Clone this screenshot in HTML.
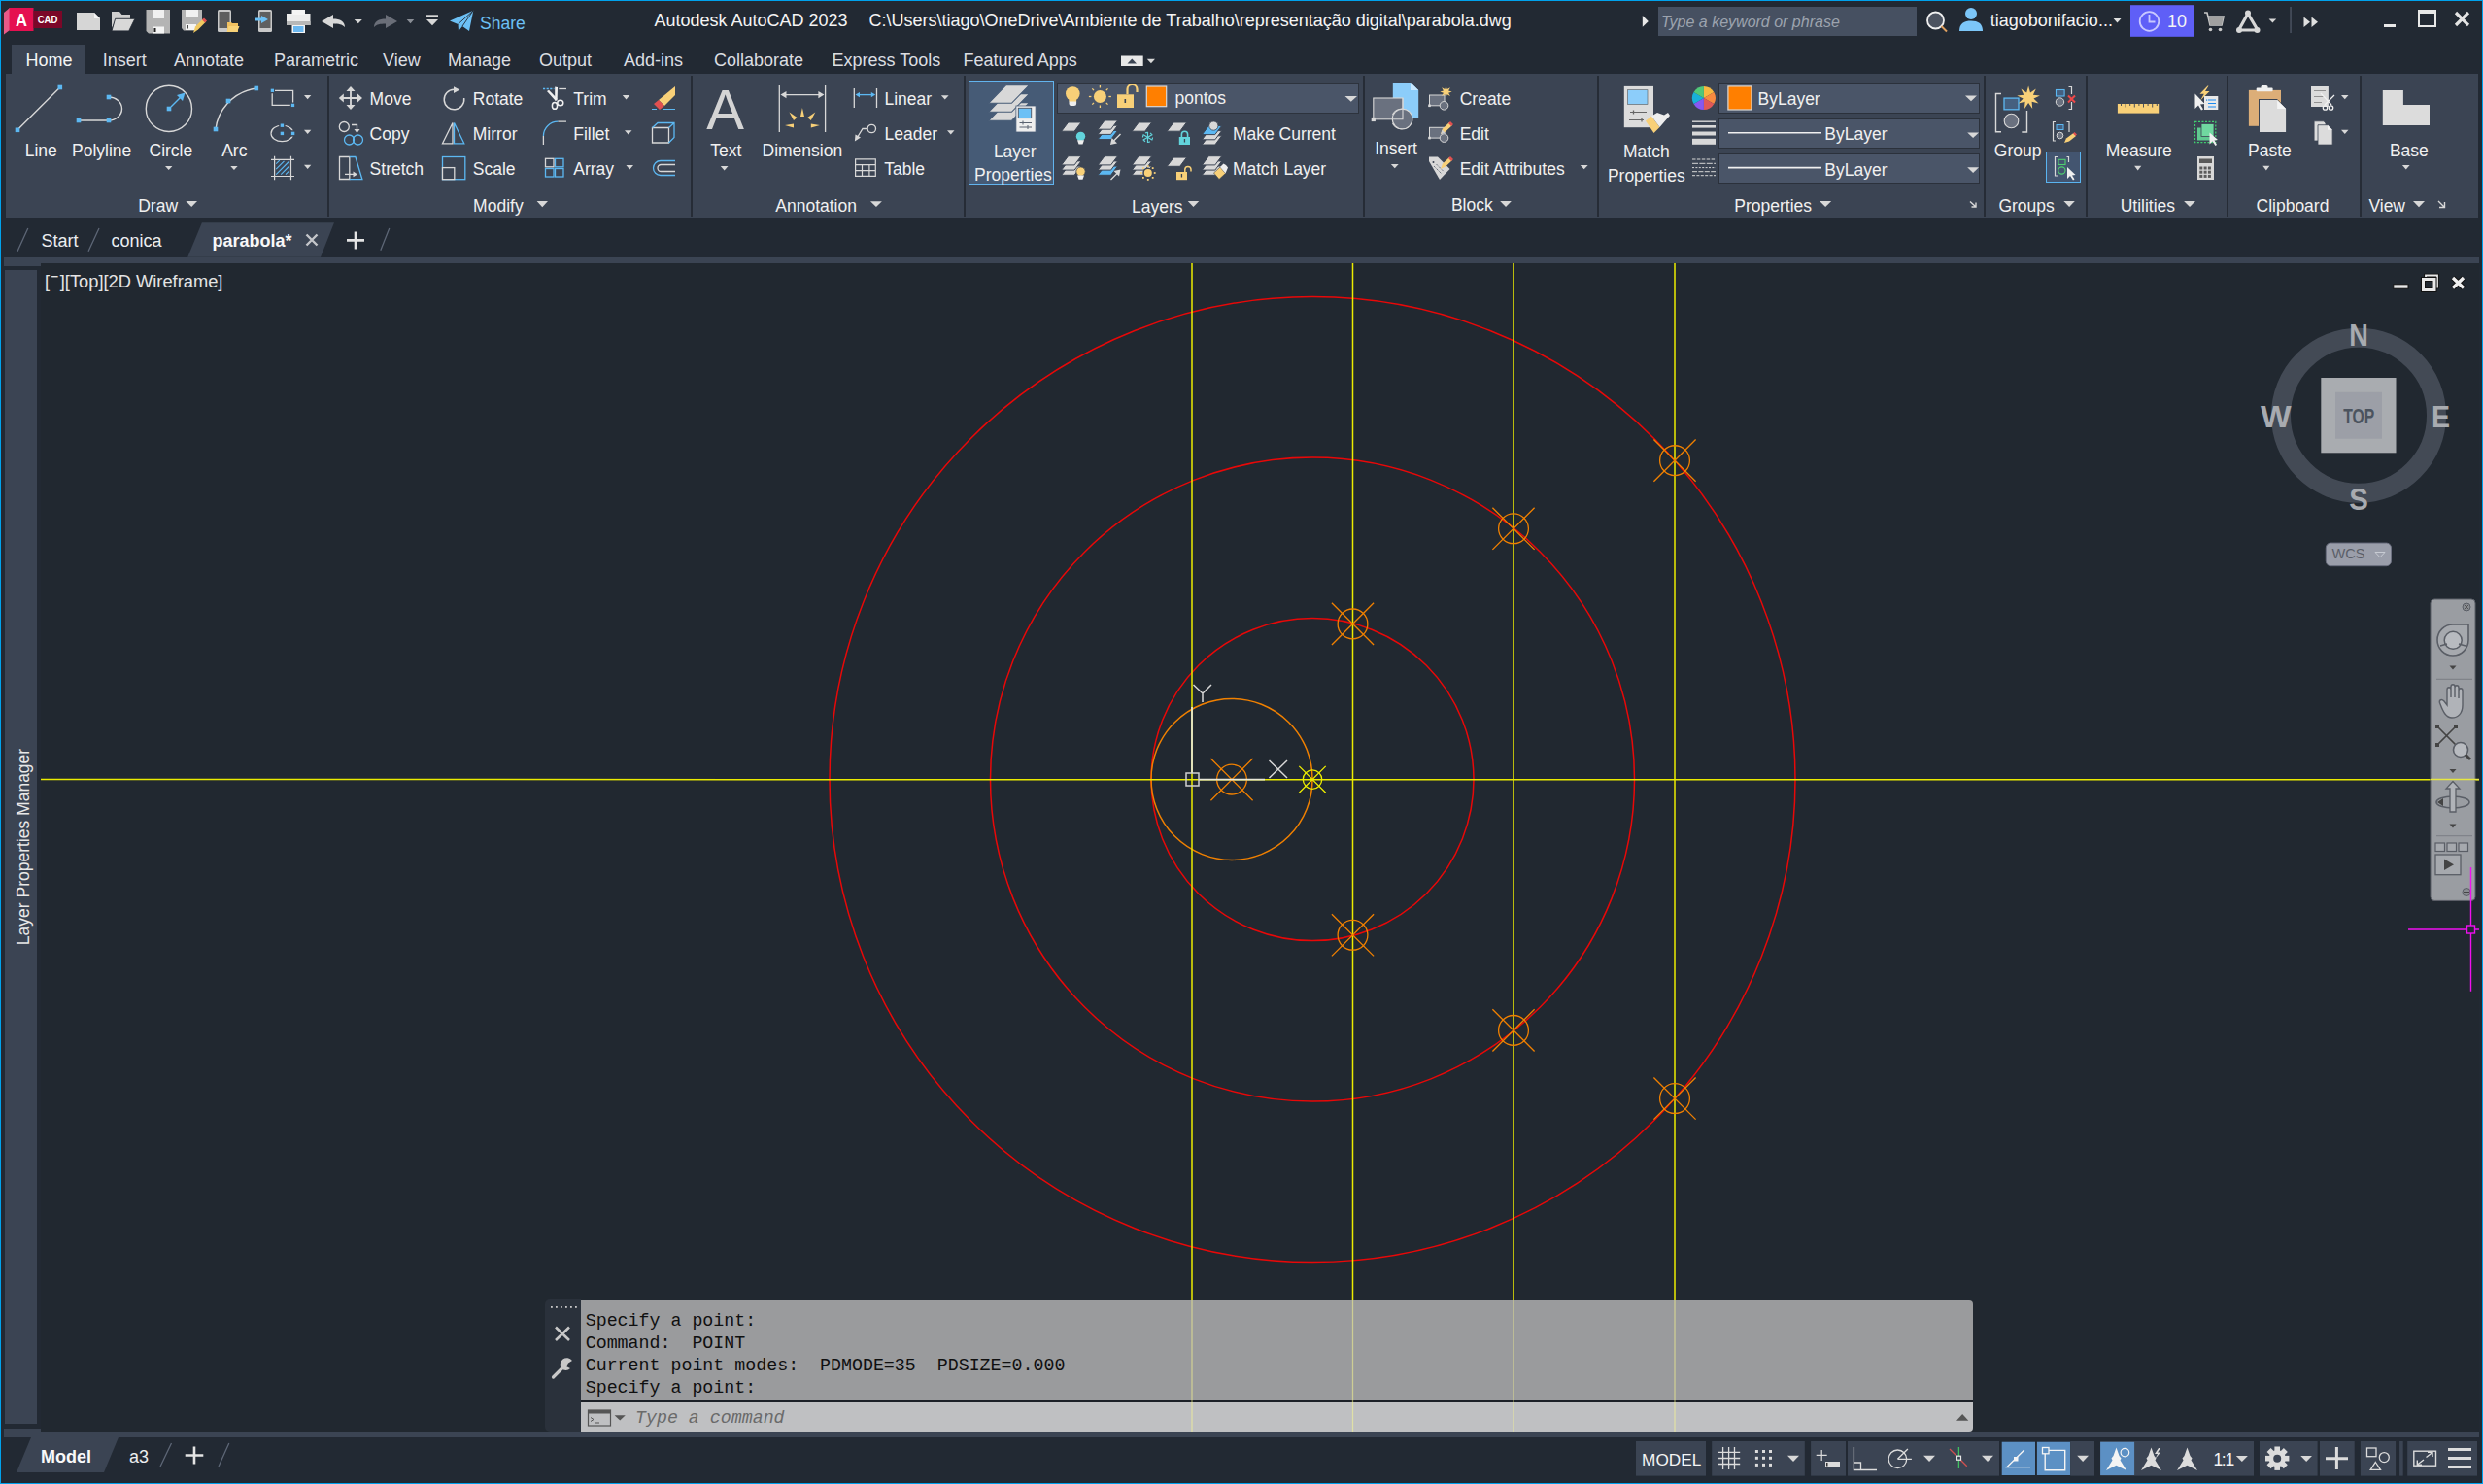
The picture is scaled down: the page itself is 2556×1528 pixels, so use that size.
<!DOCTYPE html>
<html><head><meta charset="utf-8">
<style>
*{margin:0;padding:0;box-sizing:border-box}
html,body{width:2556px;height:1528px;overflow:hidden;background:#222933;font-family:"Liberation Sans",sans-serif;color:#f2f2f2}
.a{position:absolute}
.t{position:absolute;font-size:18px;line-height:18px;white-space:pre;color:#f0f0f0}
.r{background:#3b4453}
.sep{position:absolute;top:78px;width:2px;height:145px;background:#252b35}
.dd{position:absolute;width:0;height:0;border-left:6px solid transparent;border-right:6px solid transparent;border-top:7px solid #dcdcdc}
.sdd{position:absolute;width:0;height:0;border-left:4px solid transparent;border-right:4px solid transparent;border-top:4px solid #d8d8d8}
svg{position:absolute;overflow:visible}
</style></head><body>
<!-- window border -->
<div class="a" style="left:0;top:0;width:2556px;height:1px;background:#00a2ed"></div>
<div class="a" style="left:0;top:0;width:1px;height:1528px;background:#00a2ed"></div>
<div class="a" style="left:2555px;top:0;width:1px;height:1528px;background:#00a2ed"></div>
<div class="a" style="left:0;top:1527px;width:2556px;height:1px;background:#00a2ed"></div>


<!-- ===== TITLE BAR ===== -->
<svg style="left:0;top:0" width="70" height="42" viewBox="0 0 70 42">
 <polygon points="4,13 10,8 10,31 4,35.5" fill="#e85a88"/>
 <rect x="9.5" y="8" width="25" height="24" fill="#e51050"/>
 <rect x="34.5" y="11" width="29.5" height="18" fill="#7b0728"/>
 <text x="16" y="26.7" font-family="Liberation Sans" font-weight="bold" font-size="19" fill="#fff" textLength="12" lengthAdjust="spacingAndGlyphs">A</text>
 <text x="38.7" y="24.2" font-family="Liberation Sans" font-weight="bold" font-size="10.7" fill="#fff" textLength="20.6" lengthAdjust="spacingAndGlyphs">CAD</text>
</svg>
<svg style="left:70px;top:0" width="490" height="42" viewBox="70 0 490 42">
 <!-- new -->
 <polygon points="79,13 97,13 103,19 103,31 79,31" fill="#d6d6d6"/>
 <polygon points="97,13 103,19 97,19" fill="#f4f4f4"/>
 <!-- open -->
 <polygon points="115,12 123,12 125.5,15 134,15 134,20 119,20 115,29" fill="#cfcfcf"/>
 <polygon points="118.6,19.3 138.9,19.3 132.7,31.9 115,31.9" fill="#d8d8d8" stroke="#222933" stroke-width="0.9"/>
 <!-- save -->
 <polygon points="150.5,10 175,10 175,34.5 153,34.5 150.5,32" fill="#b4b4b4"/>
 <rect x="157" y="10" width="12" height="9" fill="#f0f0f0"/>
 <rect x="157" y="27.5" width="12" height="7" fill="#f4f4f4"/>
 <rect x="158.5" y="29" width="2" height="4" fill="#222"/>
 <!-- save as -->
 <polygon points="187,10 208,10 208,25 200,31.5 189,31.5 187,29" fill="#b4b4b4"/>
 <rect x="191" y="10" width="13" height="8" fill="#f0f0f0"/>
 <rect x="191" y="25" width="11" height="6" fill="#f4f4f4"/>
 <rect x="192" y="26" width="1.8" height="3.5" fill="#222"/>
 <polygon points="199,34 201,27.5 209,19.5 212,22.5 204,30.5" fill="#f0c860"/>
 <polygon points="208,20.5 210,18.5 213,21.5 211,23.5" fill="#e05050"/>
 <!-- mobile open -->
 <rect x="224" y="10" width="14" height="23" rx="1.5" fill="#c8c8c8"/>
 <rect x="225.5" y="12" width="11" height="17" fill="#5f5f5f"/>
 <polygon points="234,23 238,23 239,24 245,24 245,33 234,33" fill="#f0c060"/>
 <polygon points="235.5,27 246.5,27 244,33 233.5,33" fill="#f8d278"/>
 <!-- mobile save -->
 <rect x="266" y="10" width="14" height="23" rx="1.5" fill="#c8c8c8"/>
 <rect x="267.5" y="12" width="11" height="17" fill="#5f5f5f"/>
 <polygon points="262,18.5 269,18.5 269,16 276,20 269,24 269,21.5 262,21.5" fill="#6cc0f5"/>
 <!-- plot -->
 <rect x="295" y="14" width="24.5" height="12" fill="#ececec"/>
 <rect x="295" y="22" width="24.5" height="4" fill="#b8b8b8"/>
 <rect x="300.5" y="10" width="13.5" height="5" fill="#f4f4f4"/>
 <rect x="300.5" y="26" width="13.5" height="8" fill="#f4f4f4"/>
 <rect x="302" y="27" width="10.5" height="6" fill="#6cb8f0"/>
 <!-- undo -->
 <path d="M331,22 L343,15 L343,19.5 C350,19.5 355,22 355,28 C352,25 349,24.5 343,24.5 L343,29 Z" fill="#d8d8d8"/>
 <polygon points="364.7,20 372.8,20 368.75,24.3" fill="#d8d8d8"/>
 <!-- redo -->
 <path d="M409,22 L397,15 L397,19.5 C390,19.5 385,22 385,28 C388,25 391,24.5 397,24.5 L397,29 Z" fill="#6a6e78"/>
 <polygon points="418.7,20 426.3,20 422.5,24.3" fill="#8a8e96"/>
 <!-- customize -->
 <rect x="439" y="15.3" width="12" height="1.7" fill="#d8d8d8"/>
 <polygon points="439,20 451,20 445,26.3" fill="#d8d8d8"/>
 <!-- share -->
 <polygon points="463,21.5 487.3,10.8 483,32 476,27 472,32 471.5,25" fill="#6cc0f5"/>
 <polyline points="471.5,25 487,11 476,27" fill="none" stroke="#222933" stroke-width="0.9"/>
</svg>
<div class="t" style="left:494px;top:14.8px;font-size:17.5px;color:#6cc0f5">Share</div>
<div class="t" style="left:673.4px;top:11.6px;color:#f4f4f4">Autodesk AutoCAD 2023</div>
<div class="t" style="left:894.5px;top:11.6px;color:#f4f4f4">C:\Users\tiago\OneDrive\Ambiente de Trabalho\representação digital\parabola.dwg</div>
<svg style="left:1688px;top:15px" width="10" height="14" viewBox="0 0 10 14"><polygon points="2.8,1.1 8.8,6.9 2.8,12.8" fill="#e8e8e8"/></svg>
<div class="a" style="left:1707px;top:7px;width:266px;height:30px;background:#465061"></div>
<div class="t" style="left:1710px;top:13.5px;font-size:16px;font-style:italic;color:#9ca3ae">Type a keyword or phrase</div>
<svg style="left:1976px;top:0" width="420" height="42" viewBox="1976 0 420 42">
 <circle cx="1992.5" cy="21" r="8.5" fill="#4c5360" stroke="#f0f0f0" stroke-width="1.8"/>
 <line x1="1998.5" y1="27" x2="2004" y2="32.5" stroke="#e0a060" stroke-width="2"/>
 <circle cx="2029" cy="14" r="6" fill="#7cc6f8"/>
 <path d="M2017,32 C2017,24 2022,21.5 2029,21.5 C2036,21.5 2041,24 2041,32 Z" fill="#7cc6f8"/>
 <polygon points="2175.6,19 2183.5,19 2179.5,23.5" fill="#e0e0e0"/>
 <rect x="2193" y="5.2" width="66" height="32.6" fill="#5f5ff7"/>
 <circle cx="2212.5" cy="22" r="9.8" fill="none" stroke="#c8c8ff" stroke-width="1.8"/>
 <polyline points="2212.5,15 2212.5,22.5 2218.5,22.5" fill="none" stroke="#c8c8ff" stroke-width="1.8"/>
 <!-- cart -->
 <path d="M2269,13 L2272,13 L2275,26 L2287,26 L2289,17 L2273,17" fill="none" stroke="#c8c8c8" stroke-width="1.6"/>
 <polygon points="2273.5,17 2289,17 2287,26 2275,26" fill="#a0a0a0"/>
 <circle cx="2275.5" cy="30.5" r="1.8" fill="#c8c8c8"/><circle cx="2285.5" cy="30.5" r="1.8" fill="#c8c8c8"/>
 <!-- a360 -->
 <polygon points="2314,14 2324,31 2304.5,31" fill="none" stroke="#d8d8d8" stroke-width="3.2" stroke-linejoin="round"/>
 <circle cx="2314" cy="13.5" r="3" fill="#d8d8d8"/><circle cx="2305" cy="31" r="3" fill="#d8d8d8"/><circle cx="2323.5" cy="31" r="3" fill="#d8d8d8"/>
 <polygon points="2335.6,19.5 2343.2,19.5 2339.4,23.5" fill="#d8d8d8"/>
 <rect x="2357.3" y="7" width="1.5" height="27" fill="#4a5260"/>
 <polygon points="2371.5,17.5 2378,22.75 2371.5,28" fill="#e0e0e0"/>
 <polygon points="2379.5,17.5 2386,22.75 2379.5,28" fill="#e0e0e0"/>
</svg>
<div class="t" style="left:2048.8px;top:11.6px;color:#f4f4f4">tiagobonifacio...</div>
<div class="t" style="left:2231px;top:12.6px;color:#f4f4f4">10</div>
<!-- window controls -->
<div class="a" style="left:2454px;top:25px;width:12px;height:3px;background:#e8e8e8"></div>
<div class="a" style="left:2489px;top:10px;width:19px;height:18px;border:2px solid #e8e8e8;border-top-width:4px"></div>
<svg style="left:2524px;top:8px" width="26" height="24" viewBox="0 0 26 24"><path d="M4,5 L17,18 M17,5 L4,18" stroke="#e4e4e4" stroke-width="3.2"/></svg>
<div class="a r" style="left:12px;top:46px;width:76px;height:31px"></div>
<div class="a r" style="left:6px;top:76px;width:2545px;height:148px"></div>
<div class="a" style="left:336.5px;top:78px;width:2px;height:145px;background:#262c36"></div>
<div class="a" style="left:710.5px;top:78px;width:2px;height:145px;background:#262c36"></div>
<div class="a" style="left:992px;top:78px;width:2px;height:145px;background:#262c36"></div>
<div class="a" style="left:1402.5px;top:78px;width:2px;height:145px;background:#262c36"></div>
<div class="a" style="left:1643.5px;top:78px;width:2px;height:145px;background:#262c36"></div>
<div class="a" style="left:2041.5px;top:78px;width:2px;height:145px;background:#262c36"></div>
<div class="a" style="left:2146.5px;top:78px;width:2px;height:145px;background:#262c36"></div>
<div class="a" style="left:2292px;top:78px;width:2px;height:145px;background:#262c36"></div>
<div class="a" style="left:2428.5px;top:78px;width:2px;height:145px;background:#262c36"></div>
<div class="a" style="left:996.5px;top:82.5px;width:88.8px;height:107.8px;background:#465b76;border:1.5px solid #62b4ee"></div>
<div class="a" style="left:1087.8px;top:84.6px;width:310.8px;height:32.1px;background:#4a5568;border:1.6px solid #2d333d"></div>
<div class="a" style="left:1769.2px;top:84.5px;width:269px;height:32.9px;background:#4a5568;border:1.6px solid #2b313b"></div>
<div class="a" style="left:1769.2px;top:121.6px;width:269px;height:31.7px;background:#4a5568;border:1.6px solid #2b313b"></div>
<div class="a" style="left:1769.2px;top:157.6px;width:269px;height:31.9px;background:#4a5568;border:1.6px solid #2b313b"></div>
<div class="a" style="left:2106.2px;top:155.5px;width:35.8px;height:32.2px;background:#435570;border:1.6px solid #5ab4f0"></div>
<svg style="left:0;top:0" width="2556" height="230" viewBox="0 0 2556 230"><rect x="1154" y="57.5" width="22.7" height="10.5" fill="#e8e8e8"/><polygon points="1160.5,65.5 1170,65.5 1165.3,60.5" fill="#3b4453"/><polygon points="1180.8,60.8 1189,60.8 1184.9,65.2" fill="#d8d8d8"/>
<line x1="18" y1="133.8" x2="61.8" y2="90" stroke="#d8d8d8" stroke-width="1.4"/><rect x="15.7" y="131.5" width="4.6" height="4.6" fill="#5cb8f2"/>
<rect x="59.5" y="87.7" width="4.6" height="4.6" fill="#5cb8f2"/>
<path d="M81,124 L112,124 M112,100 A13.5,12 0 0 1 112,124" fill="none" stroke="#d8d8d8" stroke-width="1.4"/><rect x="78.7" y="121.7" width="4.6" height="4.6" fill="#5cb8f2"/>
<rect x="109.7" y="121.7" width="4.6" height="4.6" fill="#5cb8f2"/>
<rect x="109.7" y="97.7" width="4.6" height="4.6" fill="#5cb8f2"/>
<circle cx="173.9" cy="111.9" r="23.6" fill="none" stroke="#d8d8d8" stroke-width="1.4"/><rect x="171.7" y="109.7" width="4.6" height="4.6" fill="#5cb8f2"/>
<line x1="176" y1="110" x2="186" y2="100" stroke="#5cb8f2" stroke-width="1.4"/><polygon points="190.5,95.5 182,98 188,104" fill="#5cb8f2"/><path d="M222,133 C224,115 238,95 263.8,91" fill="none" stroke="#d8d8d8" stroke-width="1.4"/><rect x="219.7" y="130.7" width="4.6" height="4.6" fill="#5cb8f2"/>
<rect x="232.7" y="101.7" width="4.6" height="4.6" fill="#5cb8f2"/>
<rect x="261.5" y="88.7" width="4.6" height="4.6" fill="#5cb8f2"/>
<path d="M283,93.3 H301.6 V105.6 M298.8,108.4 H280.2 V96.2" fill="none" stroke="#d8d8d8" stroke-width="1.3"/><rect x="278.75" y="91.64999999999999" width="3.3" height="3.3" fill="#5cb8f2"/>
<rect x="299.85" y="106.75" width="3.3" height="3.3" fill="#5cb8f2"/>
<ellipse cx="290.4" cy="137.4" rx="11.4" ry="8.2" fill="none" stroke="#d8d8d8" stroke-width="1.2"/><rect x="287.2" y="127" width="6.4" height="4.6" fill="#3b4453"/><rect x="299" y="134.2" width="5" height="6.4" fill="#3b4453"/><rect x="288.7" y="135.70000000000002" width="3.4" height="3.4" fill="#5cb8f2"/>
<rect x="288.7" y="127.49999999999999" width="3.4" height="3.4" fill="#5cb8f2"/>
<rect x="299.90000000000003" y="135.70000000000002" width="3.4" height="3.4" fill="#5cb8f2"/>
<path d="M279,164.4 H303 M279,181.5 H303 M282.6,160.8 V185.2 M299.5,160.8 V185.2" stroke="#d8d8d8" stroke-width="1.2"/><path d="M284.2,168.6 L287.8,165.2 M284.2,174.2 L292.5,165.8 M284.2,179.6 L297.8,166 M289.2,179.6 L297.8,171 M294,179.6 L297.8,175.8" stroke="#5cb8f2" stroke-width="1.1"/><polygon points="313,98 320.3,98 316.65,102.3" fill="#d8d8d8"/>
<polygon points="313,133.8 320.3,133.8 316.65,138.10000000000002" fill="#d8d8d8"/>
<polygon points="313,169.7 320.3,169.7 316.65,174.0" fill="#d8d8d8"/>
<polygon points="170,171 177.4,171 173.7,175" fill="#d8d8d8"/>
<polygon points="237.3,171 244.6,171 240.95,175" fill="#d8d8d8"/>
<polygon points="191.4,207 203,207 197.2,213" fill="#d8d8d8"/>
<path d="M361,92 V111 M350.5,101 H371.5" stroke="#d8d8d8" stroke-width="1.8"/><polygon points="361,89 356.5,94 365.5,94" fill="#d8d8d8"/><polygon points="361,113 356.5,108 365.5,108" fill="#d8d8d8"/><polygon points="348.8,101 353.8,96.5 353.8,105.5" fill="#d8d8d8"/><polygon points="373,101 368,96.5 368,105.5" fill="#d8d8d8"/><path d="M467.3,92.2 A10.3,10.3 0 1 0 477.7,101" fill="none" stroke="#d8d8d8" stroke-width="1.5"/><polygon points="467,89.2 473.3,92.6 467,96" fill="#d8d8d8"/><path d="M559,91.5 H570.5" stroke="#5cb8f2" stroke-width="1.3" stroke-dasharray="2.2,1.4"/><path d="M575.3,91.5 H583" stroke="#d8d8d8" stroke-width="1.3"/><polygon points="571.2,89.5 574,90 573.6,103.5 571.2,103.5" fill="#f0f0f0"/><polygon points="563,94 565,92.8 573.5,101.5 572,104" fill="#f0f0f0"/><ellipse cx="571" cy="108.9" rx="2.6" ry="3.4" fill="none" stroke="#f0f0f0" stroke-width="1.5"/><ellipse cx="576.8" cy="106" rx="3" ry="2.8" fill="none" stroke="#f0f0f0" stroke-width="1.5"/><polygon points="678,103 695,89 695,98 684,109" fill="#f8d078"/><polygon points="673,107 678,103 684,109 679,113" fill="#e05050"/><path d="M671,112.5 H676 M682,112.5 H695" stroke="#5cb8f2" stroke-width="1.2"/><circle cx="354.3" cy="130.5" r="5" fill="none" stroke="#d8d8d8" stroke-width="1.3"/><circle cx="359.5" cy="144" r="5" fill="none" stroke="#5cb8f2" stroke-width="1.3"/><circle cx="368.5" cy="144" r="5" fill="none" stroke="#5cb8f2" stroke-width="1.3"/><path d="M362,128.5 H367.5 V133" fill="none" stroke="#d8d8d8" stroke-width="1.3"/><polygon points="364.5,133 370.5,133 367.5,137" fill="#d8d8d8"/><polygon points="455.5,147.8 466,126.5 466,147.8" fill="none" stroke="#d8d8d8" stroke-width="1.3"/><polygon points="467.5,147.8 467.5,126.5 477.8,147.8" fill="none" stroke="#5cb8f2" stroke-width="1.3"/><path d="M559.4,140 A15,15 0 0 1 574.5,125.2" fill="none" stroke="#5cb8f2" stroke-width="1.3"/><path d="M559.4,140 V149 M574.5,125.2 H583" stroke="#d8d8d8" stroke-width="1.3"/><path d="M671.5,131.5 H688.5 V147 H671.5 Z" fill="none" stroke="#d8d8d8" stroke-width="1.3"/><path d="M671.5,131.5 L677,126.5 H694 V141.5 L688.5,147 M688.5,131.5 L694,126.5" fill="none" stroke="#5cb8f2" stroke-width="1.3"/><path d="M359.8,161.5 H349.5 V184.5 H359.8 V161.5" fill="none" stroke="#d8d8d8" stroke-width="1.3"/><path d="M359.8,161.5 H365.9 L372.9,184.7 H359.8" fill="none" stroke="#5cb8f2" stroke-width="1.3"/><path d="M355,179.4 H364" stroke="#d8d8d8" stroke-width="1.3"/><polygon points="368,179.4 363.5,176.5 363.5,182.3" fill="#d8d8d8"/><rect x="455.5" y="161.5" width="23.3" height="23.2" fill="none" stroke="#5cb8f2" stroke-width="1.3"/><rect x="455.5" y="172.6" width="12.3" height="12.1" fill="#3b4453" stroke="#d8d8d8" stroke-width="1.3"/><rect x="561.5" y="163.3" width="8.5" height="8.5" fill="none" stroke="#d8d8d8" stroke-width="1.3"/><rect x="571.5" y="163.3" width="8.5" height="8.5" fill="none" stroke="#5cb8f2" stroke-width="1.3"/><rect x="561.5" y="173.5" width="8.5" height="8.5" fill="none" stroke="#5cb8f2" stroke-width="1.3"/><rect x="571.5" y="173.5" width="8.5" height="8.5" fill="none" stroke="#5cb8f2" stroke-width="1.3"/><path d="M695,165.5 H680 A7.5,7.5 0 0 0 680,180.5 H695" fill="none" stroke="#5cb8f2" stroke-width="1.3"/><path d="M695,169.5 H680.5 A3.5,3.5 0 0 0 680.5,176.5 H695" fill="none" stroke="#d8d8d8" stroke-width="1.3"/><polygon points="640.8,98 648.3,98 644.55,102.6" fill="#d8d8d8"/>
<polygon points="643,134.2 650.5,134.2 646.75,138.6" fill="#d8d8d8"/>
<polygon points="644.5,170 652,170 648.25,174.5" fill="#d8d8d8"/>
<polygon points="552.6,207 564,207 558.3,213.3" fill="#d8d8d8"/>
<text x="746.5" y="133.2" font-family="Liberation Sans" font-size="58" fill="#d4d4d4" text-anchor="middle">A</text><polygon points="741.8,170.9 749.5,170.9 745.65,175.4" fill="#d8d8d8"/>
<path d="M802.3,88 V136 M849.6,88 V136 M808,97.6 H844" stroke="#d8d8d8" stroke-width="1.3"/><polygon points="803.5,97.6 809.5,94 809.5,101.2" fill="#d8d8d8"/><polygon points="848.4,97.6 842.4,94 842.4,101.2" fill="#d8d8d8"/><g fill="#f8d078"><polygon points="825.9,111 824,120 828,120"/><polygon points="812.5,115.5 817,124 820.5,121"/><polygon points="839.3,115.5 834.8,124 831.3,121"/><polygon points="808,129 817,127.5 817,131.5"/><polygon points="843.8,129 834.8,127.5 834.8,131.5"/></g><path d="M879.3,91 V111 M902.5,91 V111" stroke="#d8d8d8" stroke-width="1.3"/><path d="M883,97.6 H899" stroke="#5cb8f2" stroke-width="1.3"/><polygon points="880.5,97.6 885,95 885,100.2" fill="#5cb8f2"/><polygon points="901.3,97.6 896.8,95 896.8,100.2" fill="#5cb8f2"/><circle cx="897.3" cy="132.5" r="4.2" fill="none" stroke="#d8d8d8" stroke-width="1.3"/><path d="M893,132.5 H888 L882.5,141.5" fill="none" stroke="#d8d8d8" stroke-width="1.3"/><polygon points="879.9,145.6 880.5,138.5 886,141.5" fill="#d8d8d8"/><path d="M880.6,163.8 H901.3 V181.3 H880.6 Z M880.6,169.7 H901.3 M880.6,175.6 H901.3 M887.5,169.7 V181.3 M894.9,169.7 V181.3" fill="none" stroke="#d8d8d8" stroke-width="1.2"/><polygon points="968.9,98.2 976.6,98.2 972.75,102.5" fill="#d8d8d8"/>
<polygon points="975,134.3 982.5,134.3 978.75,138.5" fill="#d8d8d8"/>
<polygon points="896,207.2 907.9,207.2 901.95,212.9" fill="#d8d8d8"/>
<polygon points="1017.6,124.3 1035.8,105.6 1059.6,105.6 1041.4,124.3" fill="#d8d8d8" stroke="#465b76" stroke-width="1.1"/><polygon points="1017.6,115.3 1035.8,96.6 1059.6,96.6 1041.4,115.3" fill="#d8d8d8" stroke="#465b76" stroke-width="1.1"/><polygon points="1017.6,106.3 1035.8,87.6 1059.6,87.6 1041.4,106.3" fill="#d8d8d8" stroke="#465b76" stroke-width="1.1"/><rect x="1045.9" y="109" width="20.2" height="27" fill="#eeeeee" stroke="#465b76" stroke-width="0.8"/><rect x="1048.3" y="111.3" width="13.4" height="10.3" fill="#6cc0f5" stroke="#4a5260" stroke-width="0.9"/><path d="M1049.5,126.5 H1062 M1049.5,131 H1062" stroke="#5a6270" stroke-width="1"/><path d="M1053,124.5 V128.5 M1058,129 V133" stroke="#5a6270" stroke-width="1"/><circle cx="1104.3" cy="96.5" r="7.3" fill="#f8d078"/><rect x="1100.5" y="102" width="7.6" height="7" rx="2.5" fill="#eeeeee"/><rect x="1100.5" y="101.5" width="7.6" height="3" fill="#f8d078"/><circle cx="1132.4" cy="99.5" r="6.5" fill="#f8d078"/><line x1="1141.4" y1="99.5" x2="1143.9" y2="99.5" stroke="#f8d078" stroke-width="1.3"/><line x1="1138.8" y1="105.9" x2="1140.5" y2="107.6" stroke="#f8d078" stroke-width="1.3"/><line x1="1132.4" y1="108.5" x2="1132.4" y2="111.0" stroke="#f8d078" stroke-width="1.3"/><line x1="1126.0" y1="105.9" x2="1124.3" y2="107.6" stroke="#f8d078" stroke-width="1.3"/><line x1="1123.4" y1="99.5" x2="1120.9" y2="99.5" stroke="#f8d078" stroke-width="1.3"/><line x1="1126.0" y1="93.1" x2="1124.3" y2="91.4" stroke="#f8d078" stroke-width="1.3"/><line x1="1132.4" y1="90.5" x2="1132.4" y2="88.0" stroke="#f8d078" stroke-width="1.3"/><line x1="1138.8" y1="93.1" x2="1140.5" y2="91.4" stroke="#f8d078" stroke-width="1.3"/><rect x="1150" y="97.3" width="17" height="13.7" fill="#f8d078"/><path d="M1160.5,97.3 V92 A5,5 0 0 1 1170.5,92 V95" fill="none" stroke="#f8d078" stroke-width="2.2"/><rect x="1157.5" y="102" width="1.6" height="4" fill="#3b4453"/><rect x="1180.3" y="89" width="20.4" height="20.7" fill="#ff7f00" stroke="#d8d8d8" stroke-width="1.2"/><polygon points="1384.5,99 1397,99 1390.75,104.8" fill="#d8d8d8"/>
<polygon points="1092.7,135.2 1099.6000000000001,125.99999999999999 1113.0000000000002,125.99999999999999 1106.1000000000001,135.2" fill="#d8d8d8" stroke="#3b4453" stroke-width="1"/><circle cx="1112.5" cy="140.4" r="4.7" fill="#62d4dc"/><polygon points="1109,144.3 1116,144.3 1114.5,148.6 1110.5,148.6" fill="#eee"/><polygon points="1130.2,143.6 1137.1000000000001,134.4 1150.5000000000002,134.4 1143.6000000000001,143.6" fill="#5cb8f2" stroke="#3b4453" stroke-width="1"/><polygon points="1130.2,138.4 1137.1000000000001,129.20000000000002 1150.5000000000002,129.20000000000002 1143.6000000000001,138.4" fill="#d8d8d8" stroke="#3b4453" stroke-width="1"/><polygon points="1130.2,133.2 1137.1000000000001,123.99999999999999 1150.5000000000002,123.99999999999999 1143.6000000000001,133.2" fill="#d8d8d8" stroke="#3b4453" stroke-width="1"/><path d="M1153.5,138 L1146,145.5" stroke="#d8d8d8" stroke-width="1.4"/><polygon points="1143,149 1144.5,142 1150,147.5" fill="#d8d8d8"/><polygon points="1165.3,135.2 1172.2,125.99999999999999 1185.6000000000001,125.99999999999999 1178.7,135.2" fill="#d8d8d8" stroke="#3b4453" stroke-width="1"/><g stroke="#62d4dc" stroke-width="1.2" fill="none"><line x1="1181.5" y1="135.8" x2="1181.5" y2="147"/><line x1="1176.6" y1="138.6" x2="1186.4" y2="144.2"/><line x1="1176.6" y1="144.2" x2="1186.4" y2="138.6"/><circle cx="1181.5" cy="141.4" r="5" stroke-dasharray="2.2,2.9"/></g><polygon points="1201.3,135.2 1208.2,125.99999999999999 1221.6000000000001,125.99999999999999 1214.7,135.2" fill="#d8d8d8" stroke="#3b4453" stroke-width="1"/><rect x="1213.8" y="141" width="11.2" height="8" fill="#62d4dc"/><path d="M1216.4,141 V138.3 A3.1,3.1 0 0 1 1222.6,138.3 V141" fill="none" stroke="#62d4dc" stroke-width="1.6"/><rect x="1218.8" y="143" width="1.3" height="3.5" fill="#3b4453"/><polygon points="1237.4,149.0 1244.3000000000002,139.8 1257.7000000000003,139.8 1250.8000000000002,149.0" fill="#d8d8d8" stroke="#3b4453" stroke-width="1"/><polygon points="1237.4,143.8 1244.3000000000002,134.60000000000002 1257.7000000000003,134.60000000000002 1250.8000000000002,143.8" fill="#d8d8d8" stroke="#3b4453" stroke-width="1"/><polygon points="1237.4,138.6 1244.3000000000002,129.4 1257.7000000000003,129.4 1250.8000000000002,138.6" fill="#5cb8f2" stroke="#3b4453" stroke-width="1"/><circle cx="1249.3" cy="129.6" r="4.6" fill="#d8d8d8" stroke="#3b4453" stroke-width="0.8"/><polygon points="1092.7,180.3 1099.6000000000001,171.10000000000002 1113.0000000000002,171.10000000000002 1106.1000000000001,180.3" fill="#d8d8d8" stroke="#3b4453" stroke-width="1"/><polygon points="1092.7,175.10000000000002 1099.6000000000001,165.90000000000003 1113.0000000000002,165.90000000000003 1106.1000000000001,175.10000000000002" fill="#d8d8d8" stroke="#3b4453" stroke-width="1"/><polygon points="1092.7,169.9 1099.6000000000001,160.70000000000002 1113.0000000000002,160.70000000000002 1106.1000000000001,169.9" fill="#d8d8d8" stroke="#3b4453" stroke-width="1"/><circle cx="1112.5" cy="176.6" r="4.7" fill="#f8d078" stroke="#3b4453" stroke-width="0.8"/><polygon points="1109,180.6 1116,180.6 1114.5,184.8 1110.5,184.8" fill="#eee"/><polygon points="1130.2,180.3 1137.1000000000001,171.10000000000002 1150.5000000000002,171.10000000000002 1143.6000000000001,180.3" fill="#5cb8f2" stroke="#3b4453" stroke-width="1"/><polygon points="1130.2,175.10000000000002 1137.1000000000001,165.90000000000003 1150.5000000000002,165.90000000000003 1143.6000000000001,175.10000000000002" fill="#d8d8d8" stroke="#3b4453" stroke-width="1"/><polygon points="1130.2,169.9 1137.1000000000001,160.70000000000002 1150.5000000000002,160.70000000000002 1143.6000000000001,169.9" fill="#d8d8d8" stroke="#3b4453" stroke-width="1"/><path d="M1143.5,185 L1151,177.5" stroke="#d8d8d8" stroke-width="1.3"/><polygon points="1153.5,174.5 1146.5,176 1152,181.5" fill="#d8d8d8"/><polygon points="1165.3,180.3 1172.2,171.10000000000002 1185.6000000000001,171.10000000000002 1178.7,180.3" fill="#d8d8d8" stroke="#3b4453" stroke-width="1"/><polygon points="1165.3,175.10000000000002 1172.2,165.90000000000003 1185.6000000000001,165.90000000000003 1178.7,175.10000000000002" fill="#d8d8d8" stroke="#3b4453" stroke-width="1"/><polygon points="1165.3,169.9 1172.2,160.70000000000002 1185.6000000000001,160.70000000000002 1178.7,169.9" fill="#d8d8d8" stroke="#3b4453" stroke-width="1"/><circle cx="1181.8" cy="178" r="5.5" fill="#3b4453"/><circle cx="1181.8" cy="178" r="4" fill="#f8d078"/><rect x="1187.8" y="177.1" width="1.8" height="1.8" fill="#f8d078"/><rect x="1185.8" y="182.0" width="1.8" height="1.8" fill="#f8d078"/><rect x="1180.9" y="184.0" width="1.8" height="1.8" fill="#f8d078"/><rect x="1176.0" y="182.0" width="1.8" height="1.8" fill="#f8d078"/><rect x="1174.0" y="177.1" width="1.8" height="1.8" fill="#f8d078"/><rect x="1176.0" y="172.2" width="1.8" height="1.8" fill="#f8d078"/><rect x="1180.9" y="170.2" width="1.8" height="1.8" fill="#f8d078"/><rect x="1185.8" y="172.2" width="1.8" height="1.8" fill="#f8d078"/><polygon points="1201.3,171.3 1208.2,162.10000000000002 1221.6000000000001,162.10000000000002 1214.7,171.3" fill="#d8d8d8" stroke="#3b4453" stroke-width="1"/><rect x="1211" y="177" width="11" height="8.2" fill="#f8d078"/><path d="M1219.8,177 V174.5 A3.1,3.1 0 0 1 1226,174.5 V176.5" fill="none" stroke="#f8d078" stroke-width="1.5"/><rect x="1215.8" y="179" width="1.3" height="3.5" fill="#3b4453"/><polygon points="1237.4,180.3 1244.3000000000002,171.10000000000002 1257.7000000000003,171.10000000000002 1250.8000000000002,180.3" fill="#d8d8d8" stroke="#3b4453" stroke-width="1"/><polygon points="1237.4,175.10000000000002 1244.3000000000002,165.90000000000003 1257.7000000000003,165.90000000000003 1250.8000000000002,175.10000000000002" fill="#d8d8d8" stroke="#3b4453" stroke-width="1"/><polygon points="1237.4,169.9 1244.3000000000002,160.70000000000002 1257.7000000000003,160.70000000000002 1250.8000000000002,169.9" fill="#d8d8d8" stroke="#3b4453" stroke-width="1"/><polygon points="1249.5,178 1256,172 1261.5,178.5 1255,184.5" fill="#f8d078" stroke="#3b4453" stroke-width="0.6"/><polygon points="1256,172 1259.5,168.5 1262,170 1264,172.5 1261.5,178.5" fill="#eee"/><polygon points="1222.7,207 1234.3,207 1228.5,213" fill="#d8d8d8"/>
<polygon points="1433.8,85 1452,85 1460.2,93 1460.2,122 1433.8,122" fill="#8ccdfa"/><polygon points="1452,85 1460.2,93 1452,93" fill="#c8e8ff"/><rect x="1413.8" y="101" width="30.2" height="21.8" fill="#6a717f" stroke="#d8d8d8" stroke-width="1.1"/><path d="M1433.5,118 A10.3,10.3 0 1 1 1433.5,127" fill="#6a717f" stroke="#d8d8d8" stroke-width="1.1"/><circle cx="1443.6" cy="122.5" r="10.3" fill="#6a717f" stroke="#d8d8d8" stroke-width="1.1"/><path d="M1433.3,122.8 H1444 V101" fill="none" stroke="#d8d8d8" stroke-width="1.1"/><rect x="1411.7" y="120.9" width="4.2" height="4.2" fill="#d8d8d8"/>
<polygon points="1431.8,168.9 1439.7,168.9 1435.75,173.3" fill="#d8d8d8"/>
<rect x="1471.5" y="98" width="15.5" height="10.8" fill="#6a717f" stroke="#d8d8d8" stroke-width="1"/><circle cx="1486.5" cy="108.8" r="4.3" fill="#6a717f" stroke="#d8d8d8" stroke-width="1"/><rect x="1470.2" y="107.5" width="2.6" height="2.6" fill="#d8d8d8"/>
<rect x="1471.5" y="131.3" width="15.5" height="10.8" fill="#6a717f" stroke="#d8d8d8" stroke-width="1"/><circle cx="1486.5" cy="142.10000000000002" r="4.3" fill="#6a717f" stroke="#d8d8d8" stroke-width="1"/><rect x="1470.2" y="140.8" width="2.6" height="2.6" fill="#d8d8d8"/>
<polygon points="1494.7,94.6 1491.1,95.7 1492.9,99.0 1489.6,97.2 1488.5,100.8 1487.4,97.2 1484.1,99.0 1485.9,95.7 1482.3,94.6 1485.9,93.5 1484.1,90.2 1487.4,92.0 1488.5,88.4 1489.6,92.0 1492.9,90.2 1491.1,93.5" fill="#f8d078"/><polygon points="1483,138 1485,132.5 1492,126 1495,129 1488,135.5" fill="#f8d078"/><polygon points="1491,127 1493,125 1496,128 1494,130" fill="#e05050"/><polygon points="1483,138.5 1484.5,133.5 1487.5,136.5" fill="#d0d0d0"/><polygon points="1471,166 1471,161.5 1480,161.5 1492.5,174 1482,185" fill="#d8d8d8"/><circle cx="1475.5" cy="167" r="1" fill="#3b4453"/><path d="M1476,171 L1484,179 M1478.5,169 L1486,176.5" stroke="#3b4453" stroke-width="0.8" stroke-dasharray="1.2,1"/><polygon points="1483,174 1485,168.5 1492,162 1495,165 1488,171.5" fill="#f8d078"/><polygon points="1491,163 1493,161 1496,164 1494,166" fill="#e05050"/><polygon points="1626.7,169.9 1634.6,169.9 1630.65,174.3" fill="#d8d8d8"/>
<polygon points="1544.2,207 1555.9,207 1550.0500000000002,212.9" fill="#d8d8d8"/>
<rect x="1671.8" y="88.9" width="30.2" height="42.3" fill="#dcdcdc"/><rect x="1675.5" y="92.7" width="20.5" height="14.8" fill="#8ccdfa" stroke="#555" stroke-width="0.6"/><path d="M1678,115.5 H1695 M1677,123.5 H1692" stroke="#666" stroke-width="1"/><path d="M1681.5,113.5 V117.5 M1690,121.5 V125.5" stroke="#666" stroke-width="1.3"/><polygon points="1694,124.5 1700,119.5 1708.5,131 1702.5,137" fill="#f8d078"/><polygon points="1700,119.5 1706,116 1713,118.5 1717,116 1719,119 1714.5,124 1708.5,131" fill="#eeeeee"/><path d="M1753.9,100.9 L1753.90,88.90 A12,12 0 0 1 1764.29,94.90 Z" fill="#f8b840"/><path d="M1753.9,100.9 L1764.29,94.90 A12,12 0 0 1 1764.29,106.90 Z" fill="#f88a40"/><path d="M1753.9,100.9 L1764.29,106.90 A12,12 0 0 1 1753.90,112.90 Z" fill="#e05858"/><path d="M1753.9,100.9 L1753.90,112.90 A12,12 0 0 1 1743.51,106.90 Z" fill="#8858f0"/><path d="M1753.9,100.9 L1743.51,106.90 A12,12 0 0 1 1743.51,94.90 Z" fill="#18b0d8"/><path d="M1753.9,100.9 L1743.51,94.90 A12,12 0 0 1 1753.90,88.90 Z" fill="#50c878"/><g fill="#d8d8d8"><rect x="1742" y="124.5" width="24" height="1.4"/><rect x="1742" y="129" width="24" height="2.6"/><rect x="1742" y="135.5" width="24" height="4"/><rect x="1742" y="142.8" width="24" height="6"/></g><line x1="1742" y1="164" x2="1766" y2="164" stroke="#d8d8d8" stroke-width="1" stroke-dasharray="3.5,1.4"/><line x1="1742" y1="168.3" x2="1766" y2="168.3" stroke="#d8d8d8" stroke-width="1" stroke-dasharray="6,1.4"/><line x1="1742" y1="172.6" x2="1766" y2="172.6" stroke="#d8d8d8" stroke-width="1" stroke-dasharray="2,1.4"/><line x1="1742" y1="176.7" x2="1766" y2="176.7" stroke="#d8d8d8" stroke-width="1" stroke-dasharray="5,1.4"/><line x1="1742" y1="180.7" x2="1766" y2="180.7" stroke="#d8d8d8" stroke-width="1" stroke-dasharray="3,1.4"/><rect x="1778.9" y="88.9" width="24.1" height="24.1" fill="#ff7f00" stroke="#d8d8d8" stroke-width="1.2"/><path d="M1779,136.7 H1875 M1779,172.6 H1875" stroke="#f0f0f0" stroke-width="1.6"/><polygon points="2023,98.5 2035,98.5 2029.0,104.2" fill="#d8d8d8"/>
<polygon points="2025.2,136.4 2037,136.4 2031.1,142" fill="#d8d8d8"/>
<polygon points="2025.2,172.3 2037,172.3 2031.1,178" fill="#d8d8d8"/>
<polygon points="1873.1,207 1885.2,207 1879.15,212.9" fill="#d8d8d8"/>
<path d="M2028,207.5 L2034,213 M2034,208.5 V213 H2029.5" fill="none" stroke="#d8d8d8" stroke-width="1.4"/><path d="M2060,96.5 H2054.5 V135.8 H2060 M2081.3,136 H2086.5 V114" fill="none" stroke="#d8d8d8" stroke-width="1.4"/><rect x="2063" y="101.1" width="15" height="11.7" fill="#456080" stroke="#5cb8f2" stroke-width="1.3"/><circle cx="2070.5" cy="124.5" r="7.3" fill="#6a717f" stroke="#d8d8d8" stroke-width="1.1"/><polygon points="2088.1,88.6 2090.0,95.4 2095.8,91.4 2092.9,97.8 2099.9,98.5 2093.5,101.6 2098.5,106.6 2091.6,104.8 2092.2,111.9 2088.1,106.1 2084.0,111.9 2084.6,104.8 2077.7,106.6 2082.7,101.6 2076.3,98.5 2083.3,97.8 2080.4,91.4 2086.2,95.4" fill="#f8d078"/><path d="M2129.5,89.5 H2132.5 V97 M2132.5,105 V112.5 H2129.5" fill="none" stroke="#d8d8d8" stroke-width="1.2"/><rect x="2116.5" y="92.5" width="8.6" height="6.5" fill="#456080" stroke="#5cb8f2" stroke-width="1.1"/><circle cx="2120.5" cy="105" r="4.2" fill="#6a717f" stroke="#d8d8d8" stroke-width="1"/><path d="M2129,98.5 L2136,105.5 M2136,98.5 L2129,105.5" stroke="#f04848" stroke-width="2"/><path d="M2116,125.5 H2113.5 V145 H2116 M2127.5,125.5 H2130 V136" fill="none" stroke="#d8d8d8" stroke-width="1.2"/><rect x="2117" y="128.5" width="7" height="5" fill="#456080" stroke="#5cb8f2" stroke-width="1"/><circle cx="2120.5" cy="139.5" r="3.3" fill="#6a717f" stroke="#d8d8d8" stroke-width="1"/><polygon points="2125,147 2127,142.5 2134.5,137 2137,140 2130,145.5" fill="#f8d078"/><polygon points="2134,137.5 2135.5,136 2138,138.5 2136.5,140" fill="#e05050"/><path d="M2118,161.5 H2115.5 V181 H2118 M2127.5,161.5 H2129.5 V167" fill="none" stroke="#d8d8d8" stroke-width="1.2"/><rect x="2119" y="164.3" width="7" height="5.2" fill="none" stroke="#50d070" stroke-width="1.1"/><circle cx="2122.4" cy="175.5" r="3.6" fill="none" stroke="#50d070" stroke-width="1.1"/><polygon points="2128,172 2128,184 2131,181 2134,185.5 2135.5,184.5 2133,180.5 2136.5,180" fill="#f0f0f0"/><polygon points="2124.4,207 2135.8,207 2130.1000000000004,213" fill="#d8d8d8"/>
<rect x="2179.9" y="107" width="42.3" height="9.6" fill="#f8d078"/><line x1="2183.5" y1="107" x2="2183.5" y2="109" stroke="#3b4453" stroke-width="0.9"/><line x1="2188.1" y1="107" x2="2188.1" y2="110.5" stroke="#3b4453" stroke-width="0.9"/><line x1="2192.7" y1="107" x2="2192.7" y2="109" stroke="#3b4453" stroke-width="0.9"/><line x1="2197.3" y1="107" x2="2197.3" y2="110.5" stroke="#3b4453" stroke-width="0.9"/><line x1="2201.9" y1="107" x2="2201.9" y2="109" stroke="#3b4453" stroke-width="0.9"/><line x1="2206.5" y1="107" x2="2206.5" y2="110.5" stroke="#3b4453" stroke-width="0.9"/><line x1="2211.1" y1="107" x2="2211.1" y2="109" stroke="#3b4453" stroke-width="0.9"/><line x1="2215.7" y1="107" x2="2215.7" y2="110.5" stroke="#3b4453" stroke-width="0.9"/><line x1="2220.3" y1="107" x2="2220.3" y2="109" stroke="#3b4453" stroke-width="0.9"/><polygon points="2197.1,170.7 2204.3,170.7 2200.7,175.4" fill="#d8d8d8"/>
<polygon points="2272.5,88.5 2264.5,96.8 2268.8,96.8 2265,103.5 2274.5,94 2270,94 2273.5,88.5" fill="#f8d078"/><rect x="2269" y="99" width="14.3" height="14" fill="#e8e8e8"/><path d="M2273,103 H2281 M2273,106.5 H2281 M2273,110 H2281" stroke="#1a8af0" stroke-width="1.2"/><rect x="2271" y="102.5" width="1.2" height="1.2" fill="#1a8af0"/><polygon points="2259.5,96.5 2259.5,112 2263,108.5 2266,113.5 2268,112.5 2265,107.5 2269.5,107" fill="#f0f0f0"/><rect x="2259.5" y="125.3" width="21.3" height="21.3" fill="none" stroke="#40d070" stroke-width="1.2" stroke-dasharray="2,1.5"/><rect x="2262" y="131.5" width="13" height="13" fill="#60c890"/><rect x="2266" y="127.5" width="13" height="13" fill="#70d8a0" stroke="#3b4453" stroke-width="0.8"/><polygon points="2274.5,136.5 2274.5,148.5 2277.5,145.5 2280.5,150 2282,149 2279.5,144.5 2283,144" fill="#f0f0f0"/><rect x="2262" y="161" width="17" height="24" fill="#d8d8d8"/><rect x="2264" y="163.5" width="13" height="4.5" fill="#5a5a5a"/><rect x="2264.3" y="171.5" width="3" height="3" fill="#5a5a5a"/><rect x="2268.6" y="171.5" width="3" height="3" fill="#5a5a5a"/><rect x="2272.9" y="171.5" width="3" height="3" fill="#5a5a5a"/><rect x="2264.3" y="175.7" width="3" height="3" fill="#5a5a5a"/><rect x="2268.6" y="175.7" width="3" height="3" fill="#5a5a5a"/><rect x="2272.9" y="175.7" width="3" height="3" fill="#5a5a5a"/><rect x="2264.3" y="179.9" width="3" height="3" fill="#5a5a5a"/><rect x="2268.6" y="179.9" width="3" height="3" fill="#5a5a5a"/><rect x="2272.9" y="179.9" width="3" height="3" fill="#5a5a5a"/><polygon points="2248.1,207 2260,207 2254.05,213" fill="#d8d8d8"/>
<rect x="2314.9" y="92.9" width="33.1" height="36.9" fill="#dcae78"/><rect x="2322.7" y="90.5" width="16.9" height="3.8" rx="1" fill="#f0f0f0"/><rect x="2327.5" y="87.9" width="7" height="4" rx="1.5" fill="#f0f0f0"/><polygon points="2325,102 2344,102 2353.1,111 2353.1,136 2325,136" fill="#3b4453"/><polygon points="2326,103 2344.1,103 2353.1,112 2353.1,135.9 2326,135.9" fill="#dcdcdc"/><polygon points="2344.1,103 2353.1,112 2344.1,112" fill="#f4f4f4"/><polygon points="2329.3,170.7 2336.4,170.7 2332.8500000000004,175.5" fill="#d8d8d8"/>
<rect x="2379" y="89" width="17.9" height="21" fill="#dcdcdc"/><path d="M2382,93.5 H2394 M2382,99.5 H2392 M2382,105.5 H2390" stroke="#888" stroke-width="0.9"/><path d="M2389,96 L2400,108 M2403,98 L2393,108" stroke="#f0f0f0" stroke-width="1.3"/><circle cx="2393.5" cy="111" r="2.2" fill="none" stroke="#f0f0f0" stroke-width="1.3"/><circle cx="2399.5" cy="111" r="2.2" fill="none" stroke="#f0f0f0" stroke-width="1.3"/><polygon points="2410,98 2417.5,98 2413.75,102.2" fill="#d8d8d8"/>
<polygon points="2382.1,124.8 2392,124.8 2394,127 2394,145 2382.1,145" fill="#dcdcdc" stroke="#3b4453" stroke-width="0.8"/><polygon points="2386,128.7 2396,128.7 2401.1,133.8 2401.1,149.1 2386,149.1" fill="#dcdcdc" stroke="#3b4453" stroke-width="0.8"/><polygon points="2396,128.7 2401.1,133.8 2396,133.8" fill="#f4f4f4"/><polygon points="2410,133.8 2417.5,133.8 2413.75,138" fill="#d8d8d8"/>
<polygon points="2452.8,92.9 2473.9,92.9 2473.9,108 2501,108 2501,129 2452.8,129" fill="#dcdcdc"/><polygon points="2472.9,169.9 2480.6,169.9 2476.75,174.4" fill="#d8d8d8"/>
<polygon points="2484,207 2496,207 2490.0,213.2" fill="#d8d8d8"/>
<path d="M2510,207 L2516,213 M2516.5,208 V213.5 H2511" fill="none" stroke="#d8d8d8" stroke-width="1.4"/></svg>
<div class="t" style="left:26.5px;top:53.0px;font-size:18px;color:#f4f4f4;">Home</div>
<div class="t" style="left:105.7px;top:53.0px;font-size:18px;color:#dcdee2;">Insert</div>
<div class="t" style="left:179px;top:53.0px;font-size:18px;color:#dcdee2;">Annotate</div>
<div class="t" style="left:282px;top:53.0px;font-size:18px;color:#dcdee2;">Parametric</div>
<div class="t" style="left:394px;top:53.0px;font-size:18px;color:#dcdee2;">View</div>
<div class="t" style="left:461px;top:53.0px;font-size:18px;color:#dcdee2;">Manage</div>
<div class="t" style="left:555px;top:53.0px;font-size:18px;color:#dcdee2;">Output</div>
<div class="t" style="left:641.9px;top:53.0px;font-size:18px;color:#dcdee2;">Add-ins</div>
<div class="t" style="left:735px;top:53.0px;font-size:18px;color:#dcdee2;">Collaborate</div>
<div class="t" style="left:856.6px;top:53.0px;font-size:18px;color:#dcdee2;">Express Tools</div>
<div class="t" style="left:991.6px;top:53.0px;font-size:18px;color:#dcdee2;">Featured Apps</div>
<div class="t" style="left:25.7px;top:146.0px;font-size:17.5px;color:#f0f0f0;">Line</div>
<div class="t" style="left:74px;top:146.0px;font-size:17.5px;color:#f0f0f0;">Polyline</div>
<div class="t" style="left:153.5px;top:146.0px;font-size:17.5px;color:#f0f0f0;">Circle</div>
<div class="t" style="left:228.2px;top:146.0px;font-size:17.5px;color:#f0f0f0;">Arc</div>
<div class="t" style="left:142.2px;top:202.9px;font-size:17.5px;color:#f0f0f0;">Draw</div>
<div class="t" style="left:380.6px;top:93.0px;font-size:17.5px;color:#f0f0f0;">Move</div>
<div class="t" style="left:486.8px;top:93.0px;font-size:17.5px;color:#f0f0f0;">Rotate</div>
<div class="t" style="left:590.3px;top:93.0px;font-size:17.5px;color:#f0f0f0;">Trim</div>
<div class="t" style="left:380.6px;top:129.2px;font-size:17.5px;color:#f0f0f0;">Copy</div>
<div class="t" style="left:486.8px;top:129.2px;font-size:17.5px;color:#f0f0f0;">Mirror</div>
<div class="t" style="left:590.3px;top:129.2px;font-size:17.5px;color:#f0f0f0;">Fillet</div>
<div class="t" style="left:380.6px;top:165.1px;font-size:17.5px;color:#f0f0f0;">Stretch</div>
<div class="t" style="left:486.8px;top:165.1px;font-size:17.5px;color:#f0f0f0;">Scale</div>
<div class="t" style="left:590.3px;top:165.1px;font-size:17.5px;color:#f0f0f0;">Array</div>
<div class="t" style="left:487.1px;top:203.0px;font-size:17.5px;color:#f0f0f0;">Modify</div>
<div class="t" style="left:731.3px;top:146.1px;font-size:17.5px;color:#f0f0f0;">Text</div>
<div class="t" style="left:784.5px;top:146.1px;font-size:17.5px;color:#f0f0f0;">Dimension</div>
<div class="t" style="left:910.5px;top:93.1px;font-size:17.5px;color:#f0f0f0;">Linear</div>
<div class="t" style="left:910.5px;top:129.1px;font-size:17.5px;color:#f0f0f0;">Leader</div>
<div class="t" style="left:910.2px;top:164.9px;font-size:17.5px;color:#f0f0f0;">Table</div>
<div class="t" style="left:798.3px;top:202.9px;font-size:17.5px;color:#f0f0f0;">Annotation</div>
<div class="t" style="left:1022.9px;top:146.5px;font-size:17.5px;color:#f0f0f0;">Layer</div>
<div class="t" style="left:1003px;top:170.5px;font-size:17.5px;color:#f0f0f0;">Properties</div>
<div class="t" style="left:1209.5px;top:91.5px;font-size:17.5px;color:#f0f0f0;">pontos</div>
<div class="t" style="left:1268.9px;top:129.2px;font-size:17.5px;color:#f0f0f0;">Make Current</div>
<div class="t" style="left:1268.9px;top:165.2px;font-size:17.5px;color:#f0f0f0;">Match Layer</div>
<div class="t" style="left:1165px;top:203.5px;font-size:17.5px;color:#f0f0f0;">Layers</div>
<div class="t" style="left:1415.2px;top:144.2px;font-size:17.5px;color:#f0f0f0;">Insert</div>
<div class="t" style="left:1502.7px;top:93.1px;font-size:17.5px;color:#f0f0f0;">Create</div>
<div class="t" style="left:1502.7px;top:128.8px;font-size:17.5px;color:#f0f0f0;">Edit</div>
<div class="t" style="left:1502.7px;top:164.5px;font-size:17.5px;color:#f0f0f0;">Edit Attributes</div>
<div class="t" style="left:1493.9px;top:202.0px;font-size:17.5px;color:#f0f0f0;">Block</div>
<div class="t" style="left:1671px;top:147.3px;font-size:17.5px;color:#f0f0f0;">Match</div>
<div class="t" style="left:1654.9px;top:172.2px;font-size:17.5px;color:#f0f0f0;">Properties</div>
<div class="t" style="left:1809.5px;top:93.3px;font-size:17.5px;color:#f0f0f0;">ByLayer</div>
<div class="t" style="left:1878.3px;top:129.2px;font-size:17.5px;color:#f0f0f0;">ByLayer</div>
<div class="t" style="left:1878.3px;top:165.5px;font-size:17.5px;color:#f0f0f0;">ByLayer</div>
<div class="t" style="left:1785.3px;top:203.3px;font-size:17.5px;color:#f0f0f0;">Properties</div>
<div class="t" style="left:2052.8px;top:146.0px;font-size:17.5px;color:#f0f0f0;">Group</div>
<div class="t" style="left:2057.4px;top:203.3px;font-size:17.5px;color:#f0f0f0;">Groups</div>
<div class="t" style="left:2167.7px;top:146.0px;font-size:17.5px;color:#f0f0f0;">Measure</div>
<div class="t" style="left:2182.7px;top:203.3px;font-size:17.5px;color:#f0f0f0;">Utilities</div>
<div class="t" style="left:2314px;top:146.1px;font-size:17.5px;color:#f0f0f0;">Paste</div>
<div class="t" style="left:2322.5px;top:202.5px;font-size:17.5px;color:#f0f0f0;">Clipboard</div>
<div class="t" style="left:2459.9px;top:145.5px;font-size:17.5px;color:#f0f0f0;">Base</div>
<div class="t" style="left:2438.4px;top:203.0px;font-size:17.5px;color:#f0f0f0;">View</div>
<svg style="left:0;top:224px" width="420" height="42" viewBox="0 224 420 42"><path d="M18,258.7 L28.8,235 M91,258.7 L102,235 M391.8,257.7 L400.8,235" stroke="#5d6676" stroke-width="1.3"/><polygon points="193.2,264.8 207.9,229.2 344,229.2 330,264.8" fill="#3b4453"/><path d="M315.5,241.5 L326.5,252.5 M326.5,241.5 L315.5,252.5" stroke="#c4c6ca" stroke-width="2.4"/><path d="M366,238.4 V256.4 M357,247.4 H375" stroke="#e4e4e4" stroke-width="2.6"/></svg>
<div class="t" style="left:42.4px;top:239.0px;font-size:18px;color:#eceef0;">Start</div>
<div class="t" style="left:114.6px;top:239.0px;font-size:18px;color:#eceef0;">conica</div>
<div class="t" style="left:218.6px;top:239.0px;font-size:18px;color:#f8f8f8;font-weight:bold;">parabola*</div>
<div class="a r" style="left:4px;top:265px;width:2548px;height:6px"></div>
<div class="a r" style="left:4px;top:271px;width:38px;height:3px"></div>
<div class="a r" style="left:5px;top:278px;width:33px;height:1188px"></div>
<div class="a" style="left:42px;top:271px;width:2510px;height:1203px;background:#212830"></div>
<div class="a r" style="left:4px;top:1471px;width:38px;height:3px"></div>
<div class="a r" style="left:4px;top:1474px;width:2548px;height:6px"></div>
<div class="t" style="left:21.5px;top:872px;font-size:17.5px;color:#e8e8e8;transform:translate(-50%,-50%) rotate(-90deg);transform-origin:center;left:24px">Layer Properties Manager</div>
<div class="t" style="left:46px;top:280.8px;font-size:18.3px;color:#e4e4e4;">[<span style="position:relative;top:-4.5px;display:inline-block;transform:scaleX(0.75)">−</span>][Top][2D Wireframe]</div>
<svg style="left:0;top:0" width="2556" height="1528" viewBox="0 0 2556 1528"><defs><clipPath id="vp"><rect x="42" y="271" width="2510" height="1203"/></clipPath></defs><g clip-path="url(#vp)"><g fill="none" stroke-width="1.5"><circle cx="1351" cy="802.6" r="166" stroke="#e80808"/><circle cx="1351" cy="802.6" r="331.5" stroke="#e80808"/><circle cx="1351" cy="802.6" r="497" stroke="#e80808"/><circle cx="1268" cy="802.4" r="83" stroke="#f08000"/></g><g stroke="#ecec00" stroke-width="1.5"><line x1="1227" y1="271" x2="1227" y2="1339"/><line x1="1392.5" y1="271" x2="1392.5" y2="1339"/><line x1="1558" y1="271" x2="1558" y2="1339"/><line x1="1724" y1="271" x2="1724" y2="1339"/><line x1="42" y1="802.6" x2="2552" y2="802.7"/></g><g fill="none" stroke="#f08000" stroke-width="1.3"><circle cx="1392.5" cy="642.3876409261758" r="15.4"/><path d="M1370.9,620.7876409261758 L1414.1,663.9876409261758 M1414.1,620.7876409261758 L1370.9,663.9876409261758"/></g><g fill="none" stroke="#f08000" stroke-width="1.3"><circle cx="1392.5" cy="962.8123590738243" r="15.4"/><path d="M1370.9,941.2123590738242 L1414.1,984.4123590738243 M1414.1,941.2123590738242 L1370.9,984.4123590738243"/></g><g fill="none" stroke="#f08000" stroke-width="1.3"><circle cx="1558" cy="544.3133375491487" r="15.4"/><path d="M1536.4,522.7133375491487 L1579.6,565.9133375491488 M1579.6,522.7133375491487 L1536.4,565.9133375491488"/></g><g fill="none" stroke="#f08000" stroke-width="1.3"><circle cx="1558" cy="1060.8866624508514" r="15.4"/><path d="M1536.4,1039.2866624508515 L1579.6,1082.4866624508513 M1579.6,1039.2866624508515 L1536.4,1082.4866624508513"/></g><g fill="none" stroke="#f08000" stroke-width="1.3"><circle cx="1724" cy="474.1490904259816" r="15.4"/><path d="M1702.4,452.5490904259816 L1745.6,495.74909042598165 M1745.6,452.5490904259816 L1702.4,495.74909042598165"/></g><g fill="none" stroke="#f08000" stroke-width="1.3"><circle cx="1724" cy="1131.0509095740185" r="15.4"/><path d="M1702.4,1109.4509095740186 L1745.6,1152.6509095740184 M1745.6,1109.4509095740186 L1702.4,1152.6509095740184"/></g><g fill="none" stroke="#f08000" stroke-width="1.3"><circle cx="1268" cy="802.6" r="15.4"/><path d="M1246.4,781.0 L1289.6,824.2 M1289.6,781.0 L1246.4,824.2"/></g><g fill="none" stroke="#ecec00" stroke-width="1.3"><circle cx="1351" cy="802.6" r="9.7"/><path d="M1337.3,788.9 L1364.7,816.3000000000001 M1364.7,788.9 L1337.3,816.3000000000001"/></g><g stroke="#e8e8d8" stroke-width="1.7" fill="none"><path d="M1227,728 V796 M1234,802.6 H1302"/><rect x="1221" y="796" width="13" height="13" stroke="#d0d0d0" stroke-width="1.5"/><path d="M1228.5,705 L1238,714 L1247,705 M1238,714 V723" stroke="#d8d8d8" stroke-width="1.5"/><path d="M1306.5,783 L1325,801 M1325,783 L1306.5,801" stroke="#d8d8d8" stroke-width="1.5"/></g></g></svg>
<svg style="left:2455px;top:278px" width="90" height="28" viewBox="2455 278 90 28"><rect x="2463.8" y="292.8" width="15.2" height="4.4" fill="#e8e8e8" stroke="#111" stroke-width="1"/><path d="M2497,287 V283.5 H2509 V295.5 H2505.5" fill="none" stroke="#111" stroke-width="3.6"/><path d="M2497,287 V283.5 H2509 V295.5 H2505.5" fill="none" stroke="#e8e8e8" stroke-width="1.8"/><rect x="2494.5" y="287.5" width="11.5" height="11" fill="none" stroke="#111" stroke-width="5"/><rect x="2494.5" y="287.5" width="11.5" height="11" fill="none" stroke="#e8e8e8" stroke-width="3"/><path d="M2525,286 L2536,296.5 M2536,286 L2525,296.5" stroke="#111" stroke-width="5.4"/><path d="M2525,286 L2536,296.5 M2536,286 L2525,296.5" stroke="#f0f0f0" stroke-width="3.4"/></svg>
<svg style="left:0;top:0" width="2556" height="1528" viewBox="0 0 2556 1528"><circle cx="2428" cy="427.7" r="80" fill="none" stroke="#434a55" stroke-width="20"/><rect x="2389.3" y="389" width="77.2" height="77.3" fill="#a9acb0"/><rect x="2404" y="403.8" width="48" height="47.9" fill="#9c9fa7"/><text x="2412.2" y="436" font-family="Liberation Sans" font-weight="bold" font-size="22.5" fill="#4b535e" textLength="32" lengthAdjust="spacingAndGlyphs">TOP</text><text x="2418.2" y="356" font-family="Liberation Sans" font-weight="bold" font-size="32" fill="#a8abb0" textLength="19.6" lengthAdjust="spacingAndGlyphs">N</text><text x="2418.2" y="525" font-family="Liberation Sans" font-weight="bold" font-size="32" fill="#a8abb0" textLength="19.6" lengthAdjust="spacingAndGlyphs">S</text><text x="2327" y="440" font-family="Liberation Sans" font-weight="bold" font-size="32" fill="#a8abb0" textLength="31.6" lengthAdjust="spacingAndGlyphs">W</text><text x="2503" y="440" font-family="Liberation Sans" font-weight="bold" font-size="32" fill="#a8abb0" textLength="19.0" lengthAdjust="spacingAndGlyphs">E</text><rect x="2394.3" y="559.1" width="67.2" height="23.6" rx="5" fill="#9a9eaa" stroke="#6c7080" stroke-width="1"/><text x="2400.6" y="574.8" font-family="Liberation Sans" font-size="14" fill="#5a5e68" textLength="34" lengthAdjust="spacingAndGlyphs">WCS</text><polygon points="2445,568.5 2455,568.5 2450,573.8" fill="none" stroke="#c8ccd4" stroke-width="1"/><rect x="2502" y="617" width="46" height="310.4" rx="4" fill="#9a9da2" stroke="#5c6068" stroke-width="1"/><circle cx="2539" cy="625" r="4" fill="#8a8d92" stroke="#5a5e66" stroke-width="1"/><path d="M2537,623 L2541,627 M2541,623 L2537,627" stroke="#444" stroke-width="0.8"/><path d="M2509,659 A16,16 0 0 1 2525,643 H2541 V659 A16,16 0 0 1 2509,659 Z" fill="#a6a9ae" stroke="#5a5e66" stroke-width="1.6"/><circle cx="2525.2" cy="659.3" r="9" fill="#b8bbc0" stroke="#5a5e66" stroke-width="1.5"/><path d="M2512,665 L2519,663 M2538,665 L2531,663" stroke="#5a5e66" stroke-width="1.4"/><polygon points="2521.5,685.5 2528.5,685.5 2525.0,689.5" fill="#444"/>
<line x1="2508" y1="699.3" x2="2545" y2="699.3" stroke="#7a7d84" stroke-width="1"/><path d="M2512,725 C2510,721 2513,719 2516,722 L2519,726 V710 C2519,707 2523,707 2523,710 V718 V707 C2523,704 2527,704 2527,707 V718 V708 C2527,705 2531,705 2531,708 V719 V711 C2531,708 2535,708 2535,711 V726 C2535,735 2530,739 2524,739 C2518,739 2515,733 2512,725 Z" fill="#b0b3b8" stroke="#5a5e66" stroke-width="1.4"/><path d="M2509,748 L2528,767 M2528,748 L2509,767" stroke="#444" stroke-width="1.6"/><g fill="#444"><rect x="2507" y="746" width="4" height="4"/><rect x="2526" y="746" width="4" height="4"/><rect x="2507" y="765" width="4" height="4"/></g><circle cx="2533" cy="772" r="7.5" fill="#b8bbc0" stroke="#5a5e66" stroke-width="1.6"/><path d="M2538,777 L2543,782" stroke="#444" stroke-width="3"/><polygon points="2521.5,792 2528.5,792 2525.0,796" fill="#444"/>
<ellipse cx="2525" cy="826" rx="17" ry="6" fill="none" stroke="#5a5e66" stroke-width="1.6"/><path d="M2522,836 V812 H2518 L2525,804.5 L2532,812 H2528 V836 Z" fill="#b0b3b8" stroke="#5a5e66" stroke-width="1.3"/><polygon points="2509,826 2515,822 2515,830" fill="#444"/><polygon points="2521.5,848.5 2528.5,848.5 2525.0,852.5" fill="#444"/>
<line x1="2508" y1="860.7" x2="2545" y2="860.7" stroke="#7a7d84" stroke-width="1"/><rect x="2507" y="868" width="9.5" height="8.5" fill="#a6a9ae" stroke="#5a5e66" stroke-width="1.2"/><rect x="2519" y="868" width="9.5" height="8.5" fill="#a6a9ae" stroke="#5a5e66" stroke-width="1.2"/><rect x="2531" y="868" width="9.5" height="8.5" fill="#a6a9ae" stroke="#5a5e66" stroke-width="1.2"/><rect x="2507" y="880" width="26" height="20.7" fill="#a6a9ae" stroke="#5a5e66" stroke-width="1.3"/><polygon points="2516,884.5 2526,890.3 2516,896" fill="#444"/><circle cx="2539" cy="918.5" r="4" fill="#8a8d92" stroke="#5a5e66" stroke-width="1"/><line x1="2536" y1="918.5" x2="2542" y2="918.5" stroke="#444" stroke-width="1"/><line x1="2502" y1="802.6" x2="2552" y2="802.6" stroke="#e8e840" stroke-width="1.5"/><path d="M2543.5,893 V953 M2543.5,961 V1020.7 M2479,957 H2539.5 M2547.5,957 H2552" stroke="#f010f0" stroke-width="1.4"/><rect x="2539.5" y="953" width="8" height="8" fill="none" stroke="#f010f0" stroke-width="1.4"/></svg>
<div class="a" style="left:561px;top:1338px;width:37px;height:135.5px;background:#2a313b;border-radius:5px 0 0 5px"></div>
<div class="a" style="left:598px;top:1339px;width:1433px;height:103px;background:#9a9b9d;border-radius:0 4px 0 0"></div>
<div class="a" style="left:598px;top:1442px;width:1433px;height:2px;background:#1c2027"></div>
<div class="a" style="left:598px;top:1444px;width:1433px;height:29.5px;background:#bfc0c2;border-radius:0 0 4px 0"></div>
<svg style="left:0;top:0" width="2556" height="1528" viewBox="0 0 2556 1528"><rect x="567" y="1345" width="1.8" height="1.8" fill="#c8c8c8"/><rect x="572" y="1345" width="1.8" height="1.8" fill="#c8c8c8"/><rect x="577" y="1345" width="1.8" height="1.8" fill="#c8c8c8"/><rect x="582" y="1345" width="1.8" height="1.8" fill="#c8c8c8"/><rect x="587" y="1345" width="1.8" height="1.8" fill="#c8c8c8"/><rect x="592" y="1345" width="1.8" height="1.8" fill="#c8c8c8"/><path d="M572,1366.5 L586,1380 M586,1366.5 L572,1380" stroke="#c8c8c8" stroke-width="2.6"/><path d="M569.5,1418 L580,1407.5" stroke="#c8c8c8" stroke-width="3.2" stroke-linecap="round"/><path d="M578,1409 A6,6 0 1 1 589,1401 L585,1403.5 L583,1407 L587,1409 A6,6 0 0 1 578,1409 Z" fill="#c8c8c8"/><rect x="605.5" y="1452" width="23" height="16" fill="none" stroke="#555" stroke-width="1.2"/><rect x="605.5" y="1452" width="23" height="3.5" fill="#555"/><path d="M608,1459.5 L611,1461.5 L608,1463.5 M612,1465 H617" fill="none" stroke="#555" stroke-width="1"/><polygon points="632.6,1457.3 643.8,1457.3 638.2,1462.6" fill="#555"/>
<polygon points="2014,1462.7 2026.3,1462.7 2020.15,1456" fill="#555"/><line x1="1227" y1="1339" x2="1227" y2="1474" stroke="rgba(255,255,140,0.5)" stroke-width="1.3"/><line x1="1392.5" y1="1339" x2="1392.5" y2="1474" stroke="rgba(255,255,140,0.5)" stroke-width="1.3"/><line x1="1558" y1="1339" x2="1558" y2="1474" stroke="rgba(255,255,140,0.5)" stroke-width="1.3"/><line x1="1724" y1="1339" x2="1724" y2="1474" stroke="rgba(255,255,140,0.5)" stroke-width="1.3"/></svg>
<div class="t" style="left:602.7px;top:1350.7px;font-family:'Liberation Mono';font-size:18.3px;color:#101010">Specify a point:</div>
<div class="t" style="left:602.7px;top:1373.7px;font-family:'Liberation Mono';font-size:18.3px;color:#101010">Command:  POINT</div>
<div class="t" style="left:602.7px;top:1396.6px;font-family:'Liberation Mono';font-size:18.3px;color:#101010">Current point modes:  PDMODE=35  PDSIZE=0.000</div>
<div class="t" style="left:602.7px;top:1419.6px;font-family:'Liberation Mono';font-size:18.3px;color:#101010">Specify a point:</div>
<div class="t" style="left:654px;top:1451.0px;font-family:'Liberation Mono';font-size:18.3px;font-style:italic;color:#6a6a6a">Type a command</div>
<svg style="left:0;top:0" width="2556" height="1528" viewBox="0 0 2556 1528"><polygon points="17,1516 32,1480 122,1480 107,1516" fill="#3b4453"/><path d="M165,1510 L176.5,1486 M225,1510 L235.8,1486" stroke="#5d6676" stroke-width="1.3"/><path d="M200,1489.4 V1507.5 M190.7,1498.5 H209.3" stroke="#e4e4e4" stroke-width="2.6"/><rect x="1684" y="1484" width="72.0" height="35.6" fill="#3b4453"/><rect x="1762.2" y="1484" width="95.6" height="35.6" fill="#3b4453"/><rect x="1864.1" y="1484" width="35.9" height="35.6" fill="#3b4453"/><rect x="1902" y="1484" width="156.0" height="35.6" fill="#3b4453"/><rect x="2162.1" y="1484" width="157.9" height="35.6" fill="#3b4453"/><rect x="2326" y="1484" width="59.6" height="35.6" fill="#3b4453"/><rect x="2388" y="1484" width="35.7" height="35.6" fill="#3b4453"/><rect x="2429.9" y="1484" width="36.2" height="35.6" fill="#3b4453"/><rect x="2470.1" y="1484" width="3.6" height="35.6" fill="#3b4453"/><rect x="2478.2" y="1484" width="71.8" height="35.6" fill="#3b4453"/><rect x="2060.7" y="1484.7" width="34.3" height="34.3" fill="#5c90c4"/><rect x="2096.9" y="1484.7" width="34.3" height="34.3" fill="#5c90c4"/><rect x="2058" y="1484" width="98" height="35.6" fill="#3b4453" opacity="0"/><rect x="2131.2" y="1484" width="24.8" height="35.6" fill="#3b4453"/><rect x="2162.1" y="1484.8" width="35" height="34.2" fill="#5c90c4"/><path d="M1773.6,1490 V1513 M1779.6,1490 V1513 M1785.5,1490 V1513 M1768,1495.3 H1791.2 M1768,1501.5 H1791.2 M1768,1507.5 H1791.2" stroke="#dcdcdc" stroke-width="1.3"/><rect x="1806.9" y="1493.0" width="3" height="3" fill="#dcdcdc"/><rect x="1806.9" y="1499.8" width="3" height="3" fill="#dcdcdc"/><rect x="1806.9" y="1506.9" width="3" height="3" fill="#dcdcdc"/><rect x="1814.0" y="1493.0" width="3" height="3" fill="#dcdcdc"/><rect x="1814.0" y="1499.8" width="3" height="3" fill="#dcdcdc"/><rect x="1814.0" y="1506.9" width="3" height="3" fill="#dcdcdc"/><rect x="1821.0" y="1493.0" width="3" height="3" fill="#dcdcdc"/><rect x="1821.0" y="1499.8" width="3" height="3" fill="#dcdcdc"/><rect x="1821.0" y="1506.9" width="3" height="3" fill="#dcdcdc"/><polygon points="1840,1498.8 1852,1498.8 1846.0,1505.1" fill="#d8d8d8"/>
<path d="M1875.2,1493 V1504 M1869.7,1498.4 H1880.7" stroke="#dcdcdc" stroke-width="1.2"/><rect x="1879" y="1505" width="15" height="5.7" fill="#dcdcdc"/><rect x="1880" y="1506" width="1.5" height="3.5" fill="#333"/><path d="M1908.4,1490 V1513.5 H1932 M1908.4,1506 H1915.5 V1513.5" fill="none" stroke="#dcdcdc" stroke-width="1.3"/><circle cx="1953.4" cy="1502.3" r="9.3" fill="none" stroke="#dcdcdc" stroke-width="1.3"/><path d="M1953.4,1502.3 H1967.9 M1953.4,1502.3 L1963.9,1492" stroke="#dcdcdc" stroke-width="1.3"/><polygon points="1980.1,1498.8 1992,1498.8 1986.05,1505.1" fill="#d8d8d8"/>
<path d="M2016.4,1490 V1512" stroke="#40c060" stroke-width="1.3"/><path d="M2007,1492 L2024.8,1509.8" stroke="#d05050" stroke-width="1.3"/><rect x="2014.5" y="1499.2" width="4" height="4" fill="#3b4453" stroke="#e8e8e8" stroke-width="1.2"/><polygon points="2040,1498.8 2052,1498.8 2046.0,1505.1" fill="#d8d8d8"/>
<path d="M2083.8,1493 L2066,1510.6 H2090" fill="none" stroke="#f4f4f4" stroke-width="1.4"/><rect x="2073" y="1500" width="4.5" height="4.5" fill="#f4f4f4"/><rect x="2102.5" y="1490.5" width="6.5" height="6.3" fill="none" stroke="#f4f4f4" stroke-width="1.3"/><path d="M2109,1493.4 H2125.7 V1513.7 H2105.2 V1496.8" fill="none" stroke="#f4f4f4" stroke-width="1.4"/><polygon points="2138.2,1498.8 2150,1498.8 2144.1,1505.1" fill="#d8d8d8"/>
<polygon points="2178.5,1490.5 2181.5,1499.0 2183.5,1501.5 2182.5,1503.5 2189.0,1514.0 2178.5,1508.8 2168.0,1514.0 2174.5,1503.5 2173.5,1501.5 2175.5,1499.0" fill="#f4f4f4"/><circle cx="2187.4" cy="1495.6" r="4.3" fill="none" stroke="#f4f4f4" stroke-width="1.2"/><polygon points="2214.5,1490.5 2217.5,1499.0 2219.5,1501.5 2218.5,1503.5 2225.0,1514.0 2214.5,1508.8 2204.0,1514.0 2210.5,1503.5 2209.5,1501.5 2211.5,1499.0" fill="#dcdcdc"/><polygon points="2222,1491 2218,1497 2221,1497 2218.5,1502 2224,1495.5 2221,1495.5 2224,1491" fill="#dcdcdc"/><polygon points="2251.5,1490.5 2254.5,1499.0 2256.5,1501.5 2255.5,1503.5 2262.0,1514.0 2251.5,1508.8 2241.0,1514.0 2247.5,1503.5 2246.5,1501.5 2248.5,1499.0" fill="#dcdcdc"/><polygon points="2301.8,1499 2313.9,1499 2307.8500000000004,1505" fill="#d8d8d8"/>
<g transform="translate(2344.2 1501.7)"><rect x="-2.8" y="-12.2" width="5.6" height="6" fill="#dcdcdc" transform="rotate(0)"/><rect x="-2.8" y="-12.2" width="5.6" height="6" fill="#dcdcdc" transform="rotate(45)"/><rect x="-2.8" y="-12.2" width="5.6" height="6" fill="#dcdcdc" transform="rotate(90)"/><rect x="-2.8" y="-12.2" width="5.6" height="6" fill="#dcdcdc" transform="rotate(135)"/><rect x="-2.8" y="-12.2" width="5.6" height="6" fill="#dcdcdc" transform="rotate(180)"/><rect x="-2.8" y="-12.2" width="5.6" height="6" fill="#dcdcdc" transform="rotate(225)"/><rect x="-2.8" y="-12.2" width="5.6" height="6" fill="#dcdcdc" transform="rotate(270)"/><rect x="-2.8" y="-12.2" width="5.6" height="6" fill="#dcdcdc" transform="rotate(315)"/><circle cx="0" cy="0" r="8.6" fill="#dcdcdc"/><circle cx="0" cy="0" r="4" fill="#3b4453"/></g><polygon points="2368.3,1499 2380,1499 2374.15,1505" fill="#d8d8d8"/>
<path d="M2405.4,1490 V1513 M2394,1501.7 H2417" stroke="#dcdcdc" stroke-width="3"/><rect x="2436.5" y="1491" width="9.5" height="8.7" fill="none" stroke="#dcdcdc" stroke-width="1.3"/><circle cx="2454.3" cy="1500.6" r="5" fill="none" stroke="#dcdcdc" stroke-width="1.3"/><polygon points="2445.35,1505.5 2450.5,1513.3 2440.2,1513.3" fill="none" stroke="#dcdcdc" stroke-width="1.3"/><rect x="2484.8" y="1494.2" width="22.7" height="15" fill="none" stroke="#dcdcdc" stroke-width="1.4"/><path d="M2495,1503 L2488.5,1508 M2497.5,1500.5 L2504,1495.5" stroke="#dcdcdc" stroke-width="1.4"/><path d="M2488.3,1503.5 V1508.2 H2493" fill="none" stroke="#dcdcdc" stroke-width="1.4"/><path d="M2499,1495.4 H2504 V1500" fill="none" stroke="#dcdcdc" stroke-width="1.4"/><g fill="#dcdcdc"><rect x="2520" y="1491" width="24" height="3"/><rect x="2520" y="1500" width="24" height="3"/><rect x="2520" y="1509" width="24" height="3"/></g></svg>
<div class="t" style="left:42px;top:1490.8px;font-size:18px;color:#f8f8f8;font-weight:bold;">Model</div>
<div class="t" style="left:133px;top:1490.8px;font-size:18px;color:#eceef0;">a3</div>
<div class="t" style="left:1690.1px;top:1494.0px;font-size:17.2px;color:#f4f4f4;">MODEL</div>
<div class="t" style="left:2278.4px;top:1494.1px;font-size:17.5px;color:#f4f4f4;letter-spacing:-1.3px;">1:1</div>
</body></html>
